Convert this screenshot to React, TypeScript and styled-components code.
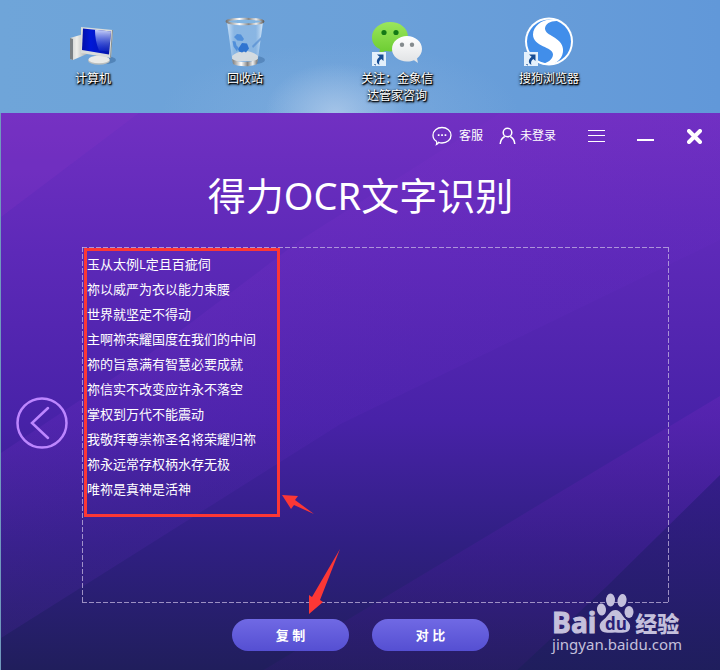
import React from "react";
import styled, { createGlobalStyle } from "styled-components";

const GlobalStyle = createGlobalStyle`
  * { box-sizing: border-box; }
  body {
    margin: 0;
    font-family: "Open Sans", "Noto Sans CJK SC", sans-serif;
    color: #fff;
  }
  button {
    font: inherit;
    color: inherit;
    border: 0;
    padding: 0;
    background: none;
    cursor: pointer;
  }
`;

const Page = styled.div`
  min-height: 100vh;
  display: flex;
  flex-direction: column;
  background: #6da2da;
`;

const Desktop = styled.header`
  height: 113px;
  display: flex;
  padding: 16px 0 0 17px;
  background:
    radial-gradient(ellipse 70px 50px at 335px 113px, rgba(180, 206, 236, 0.7), rgba(170, 200, 232, 0) 100%),
    radial-gradient(ellipse 180px 70px at 340px 113px, rgba(160, 192, 230, 0.3), rgba(170, 200, 235, 0) 100%),
    linear-gradient(90deg, #6fa5d9 0%, #6ba0d9 55%, #6198d9 100%);
`;

const Shortcut = styled.button`
  width: 152px;
  display: flex;
  flex-direction: column;
  align-items: center;
  font-size: 12px;
  line-height: 17px;
  text-shadow: 1px 1px 1px #000, 1px 1px 2px #000, 0 1px 3px #000;
`;

const ShortcutArt = styled.svg`
  width: 54px;
  height: 54px;
  flex: none;
`;

const ShortcutName = styled.span`
  max-width: 76px;
`;

const AppWindow = styled.main`
  position: relative;
  flex: 1;
  display: flex;
  flex-direction: column;
  border-left: 1px solid #7099bd;
  background: linear-gradient(180deg, #7130c2 0%, #5d29b8 25%, #4822a8 55%, #301f83 77%, #201e5c 100%);
`;

const Facets = styled.svg`
  position: absolute;
  inset: 0;
  width: 100%;
  height: 100%;
`;

const TitleBar = styled.div`
  position: relative;
  display: flex;
  justify-content: flex-end;
  align-items: center;
  height: 46px;
  padding-right: 18px;
  font-size: 12px;
  line-height: 16px;
`;

const BarButton = styled.button<{ $before: number; $gap?: number }>`
  display: flex;
  align-items: center;
  gap: ${(p) => p.$gap ?? 0}px;
  margin-left: ${(p) => p.$before}px;
  svg { display: block; }
`;

const Title = styled.h1`
  position: relative;
  margin: 10px 0 26px;
  text-align: center;
  font-size: 38px;
  line-height: 52px;
  font-weight: 400;
  font-family: "Noto Sans", "Noto Sans CJK SC", sans-serif;
`;

const Content = styled.section`
  position: relative;
  flex: 1;
  display: grid;
  grid-template-columns: 81px 1fr 51px;
`;

const Back = styled.button`
  align-self: center;
  justify-self: center;
  margin-bottom: 4px;
  svg { display: block; }
`;

const dash = "rgba(205, 192, 230, 0.7) 0 5px, transparent 5px 7px";

const ResultBox = styled.div`
  position: relative;
  display: flex;
  background:
    repeating-linear-gradient(90deg, ${dash}) top / 100% 1px no-repeat,
    repeating-linear-gradient(90deg, ${dash}) bottom / 100% 1px no-repeat,
    repeating-linear-gradient(180deg, ${dash}) left / 1px 100% no-repeat,
    repeating-linear-gradient(180deg, ${dash}) right / 1px 100% no-repeat;
`;

const ResultText = styled.textarea`
  flex: 1;
  min-height: 270px;
  margin: 0;
  padding: 5px;
  border: 0;
  outline: 0;
  resize: none;
  background: transparent;
  color: #fff;
  font: 13px/25px "Open Sans", "Noto Sans CJK SC", sans-serif;
`;

const Highlight = styled.div`
  position: absolute;
  left: 2px;
  top: 1px;
  width: 196px;
  height: 269px;
  border: 3px solid #fc3735;
  pointer-events: none;
`;

const Pointer = styled.svg<{ $left: number; $top: number }>`
  position: absolute;
  left: ${(p) => p.$left}px;
  top: ${(p) => p.$top}px;
  fill: #fc3735;
  pointer-events: none;
`;

const Actions = styled.div`
  position: relative;
  display: flex;
  justify-content: center;
  gap: 23px;
  padding: 16px 0 19px;
`;

const Action = styled.button`
  width: 117px;
  height: 32px;
  border-radius: 16px;
  background: linear-gradient(180deg, #7069e4, #554fd2);
  font-size: 13px;
  line-height: 30px;
  font-weight: 700;
`;

const Watermark = styled.div`
  position: absolute;
  right: 38px;
  bottom: 17px;
  color: #c4c0dc;
  pointer-events: none;
`;

const Brand = styled.div`
  display: flex;
  align-items: flex-end;
  height: 43px;
`;

const BrandLatin = styled.span`
  font: 700 28px/26px "Open Sans", sans-serif;
  -webkit-text-stroke: 1px currentColor;
`;

const BrandHan = styled.span`
  font: 900 22px/26px "Noto Sans CJK SC", sans-serif;
`;

const Site = styled.div`
  font: 15px/18px "Noto Sans", sans-serif;
`;

const ShortcutMark = () => (
  <g>
    <rect x="2" y="36" width="14" height="14" fill="#e4f0fb" />
    <path d="M7 38.500h6.500V45l-2.200-2.100c-2.200 1.700-2.800 3.600-1.800 5.800-3.300-1.200-3.700-5 .1-8z" fill="#174d94" />
    <path d="M4.500 48c0 .7.6 1 1.400 1" stroke="#174d94" fill="none" />
  </g>
);

const ComputerIcon = () => (
  <ShortcutArt viewBox="0 0 54 54">
    <defs>
      <linearGradient id="screen">
        <stop stopColor="#0210a8" /><stop offset=".3" stopColor="#0018d8" /><stop offset="1" stopColor="#0414a4" />
      </linearGradient>
      <linearGradient id="glare" x2="0" y2="1">
        <stop stopColor="#dfe6ff" stopOpacity=".9" /><stop offset="1" stopColor="#4a68e8" stopOpacity=".15" />
      </linearGradient>
      <linearGradient id="tower"><stop stopColor="#c9cccd" /><stop offset=".4" stopColor="#eeeeea" /><stop offset="1" stopColor="#a9adae" /></linearGradient>
    </defs>
    <ellipse cx="39" cy="44" rx="11" ry="4" fill="#315f93" opacity=".45" />
    <path d="M4 22 16 18.500l5 1V38L7 44l-3-1z" fill="url(#tower)" />
    <path d="m4 22 3 1v21l-3-1z" fill="#7b8185" />
    <path d="M30 37h8l1 6h-9z" fill="#b4b8b8" />
    <ellipse cx="33" cy="44.500" rx="11" ry="4.300" fill="#b9bdbd" />
    <ellipse cx="33" cy="43.500" rx="10.500" ry="3.800" fill="#e9eae7" />
    <path d="m15 11 32 3-2 28-30-5z" fill="#d9dcdb" />
    <path d="m17 12.500 28 3-2 23-27-4.500z" fill="url(#screen)" />
    <path d="m29 13.800 16 1.700-2 20-10-1c-3-7-4-14-4-20.700z" fill="url(#glare)" />
    <path d="m47 14-2 28-1-.2 2-27.800z" fill="#848e93" />
  </ShortcutArt>
);

const BinIcon = () => (
  <ShortcutArt viewBox="0 0 54 54">
    <defs>
      <linearGradient id="glass"><stop stopColor="#dceefe" stopOpacity=".85" /><stop offset=".2" stopColor="#a7caed" stopOpacity=".5" /><stop offset=".8" stopColor="#a7caed" stopOpacity=".5" /><stop offset="1" stopColor="#edf7ff" stopOpacity=".85" /></linearGradient>
      <linearGradient id="metal"><stop stopColor="#777" /><stop offset=".35" stopColor="#fff" /><stop offset=".6" stopColor="#858585" /><stop offset=".8" stopColor="#eee" /><stop offset="1" stopColor="#666" /></linearGradient>
    </defs>
    <ellipse cx="37" cy="44" rx="10" ry="4" fill="#315f93" opacity=".4" />
    <path d="m9 6 5.500 40c5 4 20 4 25 0L45 6z" fill="url(#glass)" />
    <path d="M14 40c3-3 8-5 13-5s10 2 13 5l-.5 5h-25z" fill="#dcdfe0" opacity=".9" />
    <path d="M14 43c6 4 20 4 26 0l-1 5c-5 3-19 3-24 0z" fill="url(#metal)" />
    <path d="m34 30 9-9v3l-8 8z" fill="#4b86cf" opacity=".6" />
    <path d="m16 21 3-3 4 .5 3 4.500-1.500 2-5-.5zM14.500 25l3 .5 1 4 2 2-1.500 4-3.500-5z" fill="#4788d8" opacity=".85" />
    <path d="m20 33 4-6 5 .5 2 5-3 4-2-1-2 1-3-1z" fill="#2f74d0" />
    <ellipse cx="27" cy="5.500" rx="18.500" ry="2.700" fill="#82b5e2" stroke="url(#metal)" strokeWidth="2" />
  </ShortcutArt>
);

const WechatIcon = () => (
  <ShortcutArt viewBox="0 0 54 54">
    <defs>
      <linearGradient id="green" x2="0" y2="1"><stop stopColor="#9be65c" /><stop offset="1" stopColor="#6acb30" /></linearGradient>
      <linearGradient id="white" x2="0" y2="1"><stop stopColor="#fff" /><stop offset="1" stopColor="#e0e2e4" /></linearGradient>
    </defs>
    <path d="M20 6C10 6 2 13 2 21c0 6 3 10 8 12l-1 5 6-3c14 2 23-4 23-14C38 12 30 6 20 6z" fill="url(#green)" />
    <circle cx="14" cy="16.500" r="2.600" fill="#147916" /><circle cx="26" cy="16.500" r="2.600" fill="#147916" />
    <path d="M37 20c-8 0-15 5.500-15 13s7 12.500 15 12.500c3 0 5-.4 7-1.200l4 2.700-1-4.500c3-2.400 5-5.500 5-9.500 0-7.500-7-13-15-13z" fill="url(#white)" />
    <circle cx="32" cy="28.700" r="2.200" fill="#858b8e" /><circle cx="42" cy="28.700" r="2.200" fill="#858b8e" />
    <ShortcutMark />
  </ShortcutArt>
);

const SogouIcon = () => (
  <ShortcutArt viewBox="0 0 54 54">
    <circle cx="27" cy="25.500" r="24" fill="#fff" />
    <circle cx="27" cy="25.500" r="22" fill="#418eea" />
    <path d="M36 5C25 0 11 8 11 18.500c0 12.500 20 12 20 20 0 5-6 9-12 9.500 13 4 23-5 22-15C40 21 23 20 23 12.500c0-5 6-8 13-7.500z" fill="#fff" />
    <ShortcutMark />
  </ShortcutArt>
);

const shortcuts = [
  { name: "计算机", Icon: ComputerIcon },
  { name: "回收站", Icon: BinIcon },
  { name: "关注：金象信达管家咨询", Icon: WechatIcon },
  { name: "搜狗浏览器", Icon: SogouIcon },
];

const recognised = [
  "玉从太例L定且百疵伺",
  "祢以威严为衣以能力束腰",
  "世界就坚定不得动",
  "主啊祢荣耀国度在我们的中间",
  "祢的旨意满有智慧必要成就",
  "祢信实不改变应许永不落空",
  "掌权到万代不能震动",
  "我敬拜尊崇祢圣名将荣耀归祢",
  "祢永远常存权柄水存无极",
  "唯祢是真神是活神",
].join("\n");

const WindowFacets = () => (
  <Facets viewBox="0 0 720 557" preserveAspectRatio="none" aria-hidden="true">
    <defs>
      <linearGradient id="lift" gradientUnits="userSpaceOnUse" x1="250" y1="170" x2="330" y2="310">
        <stop stopColor="#7a30c8" stopOpacity=".2" /><stop offset="1" stopColor="#6a2cc8" stopOpacity=".14" />
      </linearGradient>
      <linearGradient id="corner" gradientUnits="userSpaceOnUse" x1="0" y1="283" x2="0" y2="557">
        <stop stopColor="#6426b8" stopOpacity=".5" /><stop offset=".6" stopColor="#4a1c9c" stopOpacity=".3" /><stop offset="1" stopColor="#3c1a7c" stopOpacity=".2" />
      </linearGradient>
      <linearGradient id="shade" gradientUnits="userSpaceOnUse" x1="0" y1="362" x2="0" y2="557">
        <stop stopColor="#301c84" stopOpacity=".8" /><stop offset="1" stopColor="#1e1e5c" stopOpacity=".9" />
      </linearGradient>
    </defs>
    <path d="M0 0h138L0 104z" fill="#8e38ca" opacity=".2" />
    <path d="M0 340 150 240 300 127 500 0h220v127L340 311 0 525z" fill="url(#lift)" />
    <path d="M720 283v274H263l117-70z" fill="url(#corner)" />
    <path d="M720 362v195H517l90-84z" fill="url(#shade)" />
  </Facets>
);

const PawIcon = () => (
  <svg width="39" height="43" viewBox="0 0 39 43" fill="currentColor" role="img" aria-label="du">
    <ellipse cx="5.500" cy="17.500" rx="4.500" ry="6" transform="rotate(-8 5.500 17.500)" />
    <ellipse cx="14.500" cy="8" rx="4.500" ry="6.500" />
    <ellipse cx="26" cy="8.500" rx="4.500" ry="6.500" transform="rotate(10 26 8.500)" />
    <ellipse cx="33" cy="20" rx="4.500" ry="6" />
    <path d="M19.500 18c-5 0-7 5-10 8-5 4-6.500 6-5.500 10 1.200 5 6 5 15 4.500 9 .5 14 .5 15-4.500 1-4-2-6.500-5-9.500-3-3-4.500-8.500-9.500-8.500z" />
    <text x="9" y="38" fontFamily="Open Sans" fontSize="17" fontWeight="700" fill="#2a1f76">du</text>
  </svg>
);

export default function App() {
  return (
    <Page>
      <GlobalStyle />
      <Desktop>
        {shortcuts.map(({ name, Icon }) => (
          <Shortcut key={name}>
            <Icon />
            <ShortcutName>{name}</ShortcutName>
          </Shortcut>
        ))}
      </Desktop>
      <AppWindow>
        <WindowFacets />
        <TitleBar>
          <BarButton $before={0} $gap={7}>
            <svg width="20" height="20" viewBox="0 0 20 20" fill="none" stroke="#fff" strokeWidth="1.300">
              <path d="M10 1.500c5 0 9 3.200 9 7.700s-4 7.800-9 7.800c-1.300 0-2.400-.2-3.500-.6-.5 1.200-1 1.700-2 2.100.4-1 .3-2.300-.1-3.200C2.300 13.900 1 11.800 1 9.200c0-4.500 4-7.700 9-7.700z" />
              <path d="M5.800 9.200h1.700M9.200 9.200h1.700M12.600 9.200h1.700" strokeWidth="1.700" />
            </svg>
            客服
          </BarButton>
          <BarButton $before={16} $gap={4}>
            <svg width="17" height="18" viewBox="0 0 17 18" fill="none" stroke="#fff" strokeWidth="1.500">
              <circle cx="8.500" cy="5.500" r="4.300" />
              <path d="M1.200 17c.3-4 2.200-6.200 4.500-7.500M15.800 17c-.3-4-2.200-6.200-4.500-7.500" />
            </svg>
            未登录
          </BarButton>
          <BarButton $before={32} aria-label="菜单">
            <svg width="17" height="12" viewBox="0 0 17 12" stroke="#fff"><path d="M0 .5h17M0 5.500h17M0 11.500h17" /></svg>
          </BarButton>
          <BarButton $before={32} aria-label="最小化">
            <svg width="17" height="14" viewBox="0 0 17 14" fill="#fff"><path d="M0 10h17v2H0z" /></svg>
          </BarButton>
          <BarButton $before={33} aria-label="关闭">
            <svg width="15" height="15" viewBox="0 0 15 15" stroke="#fff" strokeWidth="4"><path d="m2 2 11 11M13 2 2 13" strokeLinecap="round" /></svg>
          </BarButton>
        </TitleBar>
        <Title>得力OCR文字识别</Title>
        <Content>
          <Back aria-label="返回">
            <svg width="52" height="52" viewBox="0 0 52 52" fill="none" stroke="#bd86ff" strokeWidth="2.500">
              <circle cx="26" cy="26" r="24.500" />
              <path d="M32 11 16 26l16 15" strokeLinecap="round" />
            </svg>
          </Back>
          <ResultBox>
            <ResultText aria-label="识别结果" defaultValue={recognised} spellCheck={false} />
            <Highlight />
            <Pointer $left={200} $top={248} width="34" height="22" viewBox="0 0 34 22">
              <path d="m0 0 16 1-3 4 19 14-20-9-3 4z" />
            </Pointer>
            <Pointer $left={226} $top={302} width="34" height="66" viewBox="0 0 34 66">
              <path d="M32 0 12 51l3 2L1 65V46l3 2z" />
            </Pointer>
          </ResultBox>
        </Content>
        <Actions>
          <Action>复 制</Action>
          <Action>对 比</Action>
        </Actions>
        <Watermark>
          <Brand>
            <BrandLatin>Bai</BrandLatin>
            <PawIcon />
            <BrandHan>经验</BrandHan>
          </Brand>
          <Site>jingyan.baidu.com</Site>
        </Watermark>
      </AppWindow>
    </Page>
  );
}
